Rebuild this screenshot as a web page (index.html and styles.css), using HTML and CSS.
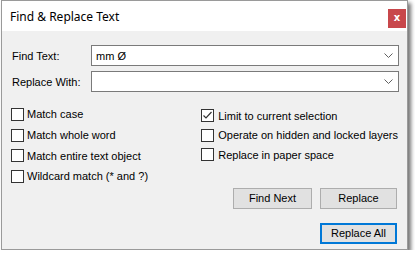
FILE: index.html
```html
<!DOCTYPE html>
<html lang="en">

<head>
    <meta charset="UTF-8">
    <meta name="viewport" content="width=device-width, initial-scale=1.0">
    <link rel="stylesheet" href="styles.css">
    <title>Find &amp; Replace Text</title>
</head>

<body>

    <div class="dialog">
        <div class="title-bar">
            <div class="title">Find &amp; Replace Text</div>
            <div class="close">x</div>
        </div>

        <div class="content">
            <div class="fields">
                <label class="field-label">Find Text:</label>
                <div class="combo">
                    <span class="combo-value">mm Ø</span>
                    <svg class="chevron" width="9" height="5" viewBox="0 0 9 5">
                        <polyline points="0.5,0.5 4.5,4.5 8.5,0.5" fill="none" stroke="#606060" stroke-width="1"/>
                    </svg>
                </div>

                <label class="field-label">Replace With:</label>
                <div class="combo">
                    <span class="combo-value"></span>
                    <svg class="chevron" width="9" height="5" viewBox="0 0 9 5">
                        <polyline points="0.5,0.5 4.5,4.5 8.5,0.5" fill="none" stroke="#606060" stroke-width="1"/>
                    </svg>
                </div>
            </div>

            <div class="options">
                <div class="option-col left">
                    <div class="option"><span class="box"></span>Match case</div>
                    <div class="option"><span class="box"></span>Match whole word</div>
                    <div class="option"><span class="box"></span>Match entire text object</div>
                    <div class="option"><span class="box"></span>Wildcard match (* and ?)</div>
                </div>
                <div class="option-col right">
                    <div class="option">
                        <span class="box">
                            <svg width="11" height="11" viewBox="0 0 11 11">
                                <polyline points="1.5,5.5 4,8 9.5,2" fill="none" stroke="#333" stroke-width="1.2"/>
                            </svg>
                        </span>Limit to current selection
                    </div>
                    <div class="option"><span class="box"></span>Operate on hidden and locked layers</div>
                    <div class="option"><span class="box"></span>Replace in paper space</div>
                </div>
            </div>

            <div class="buttons">
                <div class="btn-row">
                    <button>Find Next</button>
                    <button class="narrow">Replace</button>
                </div>
                <div class="btn-row">
                    <button class="narrow default">Replace All</button>
                </div>
            </div>
        </div>
    </div>

</body>

</html>
```

FILE: styles.css
```css
body {
    font-family: 'Liberation Sans', Arial, sans-serif;
    font-size: 11px;
    color: #000;
    background: #ffffff;
    margin: 0;
    padding: 0;
}

.dialog {
    width: 405px;
    height: 248px;
    margin-left: 1px;
    border: 1px solid #9a9a9a;
    background-color: #f0f0f0;
    box-shadow: 3px 3px 4px rgba(0, 0, 0, 0.55);
    display: flex;
    flex-direction: column;
}

.title-bar {
    height: 30px;
    background-color: #ffffff;
    display: flex;
    justify-content: space-between;
    align-items: flex-start;
}

.title {
    font-family: 'Noto Sans', 'Open Sans', sans-serif;
    font-size: 12px;
    padding: 7px 0 0 8px;
}

.close {
    width: 18px;
    height: 19px;
    margin: 8px 1px 0 0;
    background-color: #c8474b;
    color: #ffffff;
    font-family: 'DejaVu Sans', sans-serif;
    font-weight: bold;
    font-size: 10px;
    line-height: 17px;
    text-align: center;
}

.content {
    padding: 14px 9px 0 9px;
}

.fields {
    display: grid;
    grid-template-columns: 80px 308px;
    grid-row-gap: 5px;
    align-items: center;
}

.field-label {
    padding-left: 1px;
}

.combo {
    height: 19px;
    border: 1px solid #7a7a7a;
    background-color: #ffffff;
    display: flex;
    align-items: center;
    justify-content: space-between;
    padding: 0 5px 0 4px;
}

.chevron {
    display: block;
}

.options {
    display: flex;
    margin-top: 12px;
}

.option-col {
    display: flex;
    flex-direction: column;
}

.option-col.left {
    width: 194px;
}

.option-col.left .option {
    height: 20.7px;
}

.option-col.right {
    padding-top: 2px;
}

.option-col.right .option {
    height: 19.6px;
}

.option {
    display: flex;
    align-items: center;
    white-space: nowrap;
}

.box {
    width: 11px;
    height: 11px;
    border: 1px solid #333333;
    background-color: #ffffff;
    margin-right: 4px;
    display: flex;
    align-items: center;
    justify-content: center;
}

.option-col.left .box {
    margin-right: 3px;
}

.box svg {
    display: block;
}

.buttons {
    display: flex;
    flex-direction: column;
    align-items: flex-end;
    gap: 14px;
    margin-top: 1px;
    padding-right: 1px;
}

.btn-row {
    display: flex;
    gap: 8px;
}

button {
    font-family: 'Liberation Sans', Arial, sans-serif;
    font-size: 11px;
    color: #000;
    width: 79px;
    height: 21px;
    padding: 0;
    background-color: #e1e1e1;
    border: 1px solid #adadad;
    border-radius: 0;
}

button.narrow {
    width: 77px;
}

button.default {
    border: 2px solid #0078d7;
}
```
